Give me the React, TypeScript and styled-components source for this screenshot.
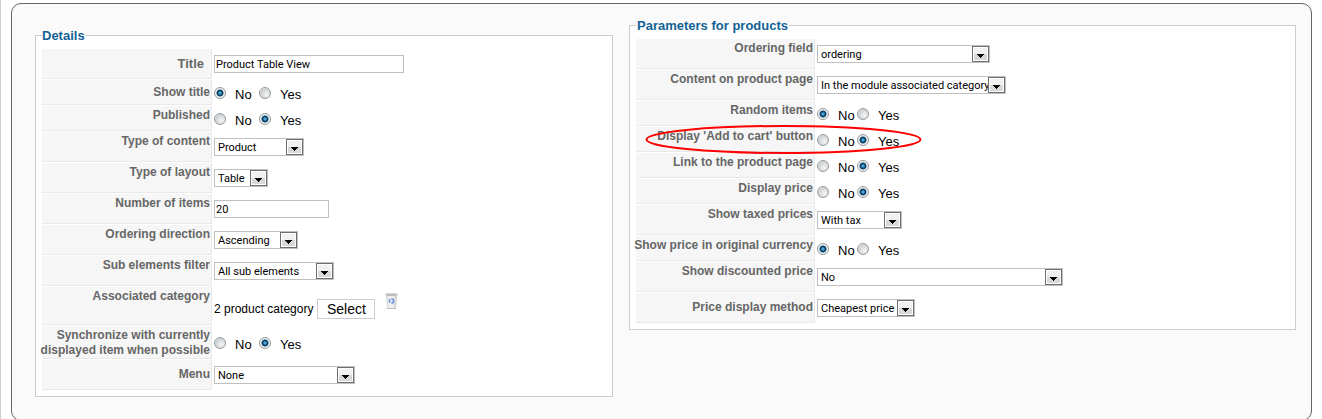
import React, { useId } from "react";
import styled, { createGlobalStyle } from "styled-components";

const Global = createGlobalStyle`
  *, *::before, *::after { box-sizing: border-box; }
  body {
    margin: 0;
    background: #fff;
    color: #000;
    font-family: "Liberation Sans", Arial, sans-serif;
    font-size: 13px;
    overflow-x: hidden;
  }
`;

const Page = styled.main`
  min-height: 100vh;
  max-height: 100vh;
  overflow: hidden;
  padding: 3px 10px 0;
  border-left: 1px solid #ccc;
`;

const Panel = styled.div`
  display: grid;
  grid-template-columns: minmax(0, 578fr) minmax(0, 667fr);
  align-items: start;
  gap: 16px;
  padding: 14px 15px 23px 23px;
  background: #fafafa;
  border: 1px solid #666;
  border-radius: 10px;
`;

const Group = styled.fieldset<{ $drop?: boolean }>`
  min-width: 0;
  margin: ${(p) => (p.$drop ? "10px" : "0")} 0 0;
  padding: 5px 6px;
  border: 1px solid #ccc;
  background: #fff;
`;

const Legend = styled.legend<{ $inset?: boolean }>`
  padding: 0 ${(p) => (p.$inset ? "1px" : "0")};
  color: #146295;
  font-size: 13px;
  font-weight: bold;
  line-height: 15px;
`;

const Table = styled.table`
  border-collapse: separate;
  border-spacing: 0 1px;
`;

const Row = styled.tr<{ $h: number }>`
  height: ${(p) => p.$h}px;
`;

const Key = styled.th<{ $w: number; $middle?: boolean; $title?: boolean }>`
  position: relative;
  width: ${(p) => p.$w}px;
  padding: ${(p) => (p.$middle ? "0" : "2px")} ${(p) => (p.$title ? "7px" : "1px")} 0 0;
  background: #f6f6f6;
  border-right: 1px solid #e9e9e9;
  border-bottom: 1px solid #e9e9e9;
  color: #666;
  font-size: ${(p) => (p.$title ? "13px" : "12px")};
  line-height: 15px;
  text-align: right;
  vertical-align: ${(p) => (p.$middle ? "middle" : "top")};
`;

const KeyText = styled.span`
  display: flex;
  justify-content: flex-end;
  width: 0;
  min-width: 100%;
  white-space: pre;
`;

const Value = styled.td`
  padding: 0 2px;
  vertical-align: middle;
`;

const TextBox = styled.input<{ $w: number }>`
  display: block;
  width: ${(p) => p.$w}px;
  height: 18px;
  padding: 0 1px;
  border: 1px solid #c0c0c0;
  background: #fff;
  color: #000;
  font: 11px Roboto, Tahoma, sans-serif;
`;

const SelectWrap = styled.span<{ $w: number }>`
  display: grid;
  width: ${(p) => p.$w}px;
  height: 18px;
`;

const NativeSelect = styled.select`
  grid-area: 1 / 1;
  appearance: none;
  width: 100%;
  height: 18px;
  padding: 0 16px 0 3px;
  border: 1px solid #c0c0c0;
  border-radius: 0;
  background: #fff;
  color: #000;
  font: 11px Roboto, Tahoma, sans-serif;
`;

const Arrow = styled.svg`
  grid-area: 1 / 1;
  place-self: center end;
  pointer-events: none;
`;

const Radios = styled.div`
  display: flex;
  padding-top: 4px;
`;

const RadioLabel = styled.label<{ $tight?: boolean }>`
  display: flex;
  flex: none;
  align-items: flex-start;
  gap: 9px;
  width: ${(p) => (p.$tight ? "40px" : "45px")};
  line-height: 16px;
`;

const Radio = styled.input`
  appearance: none;
  flex: none;
  width: 12px;
  height: 12px;
  margin: 0;
  border: 1px solid #96999b;
  border-radius: 50%;
  background: radial-gradient(circle at 65% 65%, #f6f6f6 0, #d3d6d8 55%, #c6cacc 60%, #fff 85%);
  &:checked {
    background: radial-gradient(circle closest-side at 50% 50%, #8fd4f0 0, #2384b8 25%, #0d3a5c 55%, #1b4560 62%, #eef1f3 78%);
  }
`;

const Category = styled.div`
  display: flex;
  align-items: flex-start;
  padding: 6px 0;
  font-size: 12px;
`;

const CategoryName = styled.span`
  margin-top: 7px;
  line-height: 19px;
`;

const PickButton = styled.button`
  width: 58px;
  height: 20px;
  margin: 6px 10px 0 4px;
  padding: 0;
  border: 1px solid #ccc;
  background: #fff;
  color: #000;
  font: 14px "Liberation Sans", Arial, sans-serif;
`;

const ClearButton = styled.button`
  display: flex;
  padding: 0;
  border: 0;
  background: none;
`;

const Highlight = styled.svg`
  position: absolute;
  top: -2px;
  left: 9px;
  z-index: 1;
  overflow: visible;
  pointer-events: none;
`;

interface FieldProps {
  label: string;
  h: number;
  kw: number;
  middle?: boolean;
  title?: boolean;
  marked?: boolean;
}

function Ellipse() {
  return (
    <Highlight width="278" height="30" viewBox="0 0 278 30" aria-hidden="true">
      <ellipse cx="138.5" cy="14.5" rx="137" ry="13.5" fill="none" stroke="#f00" strokeWidth="2" />
    </Highlight>
  );
}

function TrashIcon() {
  return (
    <svg width="13" height="17" viewBox="0 0 13 17" aria-hidden="true">
      <defs>
        <linearGradient id="bin">
          <stop offset="0" stopColor="#d2d2d2" />
          <stop offset="0.3" stopColor="#f2f2f2" />
          <stop offset="0.65" stopColor="#ececec" />
          <stop offset="1" stopColor="#c4c4c4" />
        </linearGradient>
      </defs>
      <path d="M1 2h11l-1 14H2z" fill="url(#bin)" />
      <rect x="0.5" y="0.5" width="12" height="2" rx="1" fill="#dedede" stroke="#c8c8c8" strokeWidth="0.6" />
      <path d="M2 2h9" stroke="#a8a49c" />
      <circle cx="6.5" cy="8" r="2.1" fill="#e6edfb" stroke="#6f8fd8" strokeWidth="1.5" strokeDasharray="3.2 1.2" />
      <path d="M2 15.5h9" stroke="#bcbcbc" />
    </svg>
  );
}

function Choice({ label, h, kw, middle, w, value }: FieldProps & { w: number; value: string }) {
  const id = useId();
  return (
    <Row $h={h}>
      <Key scope="row" $w={kw} $middle={middle}>
        <label htmlFor={id}>{label}</label>
      </Key>
      <Value>
        <SelectWrap $w={w}>
          <NativeSelect id={id} defaultValue={value}>
            <option>{value}</option>
          </NativeSelect>
          <Arrow width="18" height="18" viewBox="0 0 18 18" aria-hidden="true">
            <rect x="0.5" y="1.5" width="16" height="15" fill="#fff" stroke="#6e6e6e" />
            <rect x="2" y="3" width="13" height="6" fill="#f1f1f1" />
            <rect x="2" y="9" width="13" height="6" fill="#d8d8d8" />
            <path d="M5 9h7v1h-1v1h-1v1H9v1H8v-1H7v-1H6v-1H5z" fill="#000" />
          </Arrow>
        </SelectWrap>
      </Value>
    </Row>
  );
}

function Entry({ label, h, kw, middle, title, w, value }: FieldProps & { w: number; value: string }) {
  const id = useId();
  return (
    <Row $h={h}>
      <Key scope="row" $w={kw} $middle={middle} $title={title}>
        <label htmlFor={id}>{label}</label>
      </Key>
      <Value>
        <TextBox id={id} type="text" $w={w} defaultValue={value} />
      </Value>
    </Row>
  );
}

function Toggle({ label, h, kw, middle, marked, yes, tight }: FieldProps & { yes?: boolean; tight?: boolean }) {
  const id = useId();
  return (
    <Row $h={h}>
      <Key scope="row" $w={kw} $middle={middle}>
        <KeyText id={id + "k"}>{label}</KeyText>
        {marked && <Ellipse />}
      </Key>
      <Value>
        <Radios role="radiogroup" aria-labelledby={id + "k"}>
          <RadioLabel $tight={tight}>
            <Radio type="radio" name={id} defaultChecked={!yes} />
            No
          </RadioLabel>
          <RadioLabel $tight={tight}>
            <Radio type="radio" name={id} defaultChecked={yes} />
            Yes
          </RadioLabel>
        </Radios>
      </Value>
    </Row>
  );
}

const L = 170;
const R = 179;

export default function App() {
  return (
    <>
      <Global />
      <Page>
        <Panel>
          <Group $drop>
            <Legend>Details</Legend>
            <Table>
              <tbody>
                <Entry kw={L} h={30} label="Title" title middle w={190} value="Product Table View" />
                <Toggle kw={L} h={25} label="Show title" middle />
                <Toggle kw={L} h={25} label="Published" yes />
                <Choice kw={L} h={30} label="Type of content" w={90} value="Product" />
                <Choice kw={L} h={30} label="Type of layout" w={54} value="Table" />
                <Entry kw={L} h={30} label="Number of items" w={115} value="20" />
                <Choice kw={L} h={30} label="Ordering direction" w={84} value="Ascending" />
                <Choice kw={L} h={30} label="Sub elements filter" w={120} value="All sub elements" />
                <Row $h={38}>
                  <Key scope="row" $w={L}>Associated category</Key>
                  <Value>
                    <Category>
                      <CategoryName>2 product category</CategoryName>
                      <PickButton type="button">Select</PickButton>
                      <ClearButton type="button" aria-label="Clear category">
                        <TrashIcon />
                      </ClearButton>
                    </Category>
                  </Value>
                </Row>
                <Toggle kw={L} h={33} label={"Synchronize with currently\ndisplayed item when possible"} yes />
                <Choice kw={L} h={30} label="Menu" middle w={141} value="None" />
              </tbody>
            </Table>
          </Group>
          <Group>
            <Legend $inset>Parameters for products</Legend>
            <Table>
              <tbody>
                <Choice kw={R} h={30} label="Ordering field" w={173} value="ordering" />
                <Choice kw={R} h={30} label="Content on product page" w={189} value="In the module associated category" />
                <Toggle kw={R} h={25} label="Random items" tight />
                <Toggle kw={R} h={25} label="Display 'Add to cart' button" yes tight marked />
                <Toggle kw={R} h={25} label="Link to the product page" yes tight />
                <Toggle kw={R} h={25} label="Display price" yes tight />
                <Choice kw={R} h={30} label="Show taxed prices" w={85} value="With tax" />
                <Toggle kw={R} h={25} label="Show price in original currency" tight />
                <Choice kw={R} h={30} label="Show discounted price" w={246} value="No" />
                <Choice kw={R} h={30} label="Price display method" middle w={98} value="Cheapest price" />
              </tbody>
            </Table>
          </Group>
        </Panel>
      </Page>
    </>
  );
}
